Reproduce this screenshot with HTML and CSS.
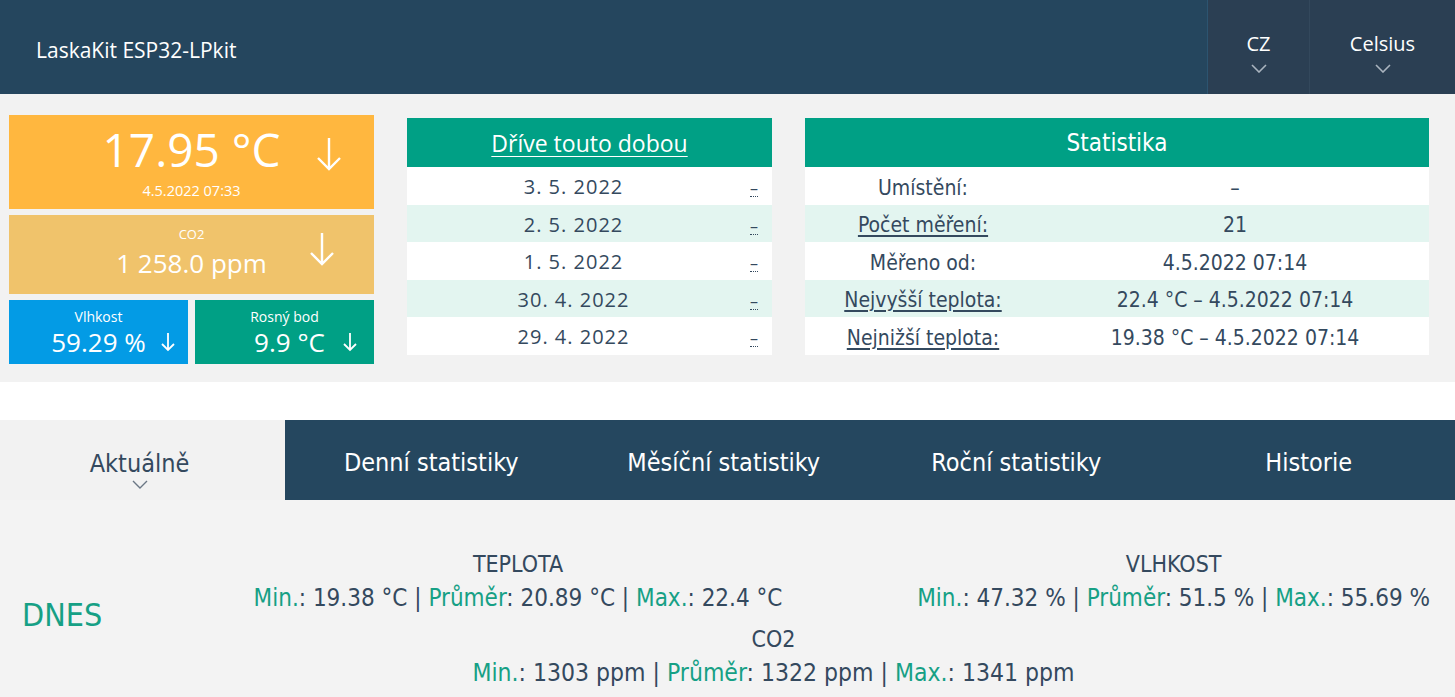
FILE: index.html
```html
<!DOCTYPE html>
<html lang="cs">
<head>
<meta charset="utf-8">
<title>LaskaKit ESP32-LPkit</title>
<link rel="stylesheet" href="styles.css">
</head>
<body>
<header class="topbar">
  <div class="brand">LaskaKit ESP32-LPkit</div>
  <div class="selectors">
    <div class="sel sel-lang">CZ<svg class="chev" viewBox="0 0 16 9" width="16" height="9"><polyline points="1,1 8,8 15,1" fill="none" stroke="#aab4bf" stroke-width="1.6"/></svg></div>
    <div class="sel sel-unit">Celsius<svg class="chev" viewBox="0 0 16 9" width="16" height="9"><polyline points="1,1 8,8 15,1" fill="none" stroke="#aab4bf" stroke-width="1.6"/></svg></div>
  </div>
</header>

<section class="overview">
  <div class="cards">
    <div class="card card-temp">
      <div class="big">17.95 °C</div>
      <div class="arrow"><svg viewBox="0 0 26 34" width="26" height="34"><path d="M13 1 V32 M2 21 L13 32 L24 21" fill="none" stroke="#fff" stroke-width="2.4"/></svg></div>
      <div class="small">4.5.2022 07:33</div>
    </div>
    <div class="card card-co2">
      <div class="small">CO2</div>
      <div class="arrow"><svg viewBox="0 0 26 34" width="26" height="34"><path d="M13 1 V32 M2 21 L13 32 L24 21" fill="none" stroke="#fff" stroke-width="2.4"/></svg></div>
      <div class="mid">1 258.0 ppm</div>
    </div>
    <div class="card-row">
      <div class="card card-hum">
        <div class="label">Vlhkost</div>
        <div class="arrow arrow-sm"><svg viewBox="0 0 16 20" width="16" height="20"><path d="M8 1 V18 M2 12 L8 18 L14 12" fill="none" stroke="#fff" stroke-width="1.8"/></svg></div>
        <div class="mid">59.29 %</div>
      </div>
      <div class="card card-dew">
        <div class="label">Rosný bod</div>
        <div class="arrow arrow-sm"><svg viewBox="0 0 16 20" width="16" height="20"><path d="M8 1 V18 M2 12 L8 18 L14 12" fill="none" stroke="#fff" stroke-width="1.8"/></svg></div>
        <div class="mid">9.9 °C</div>
      </div>
    </div>
  </div>

  <table class="tbl tbl-past">
    <thead><tr><th colspan="2"><a class="thlink" href="#">Dříve touto dobou</a></th></tr></thead>
    <tbody>
      <tr><td class="date">3. 5. 2022</td><td class="dash"><span class="dot">–</span></td></tr>
      <tr><td class="date">2. 5. 2022</td><td class="dash"><span class="dot">–</span></td></tr>
      <tr><td class="date">1. 5. 2022</td><td class="dash"><span class="dot">–</span></td></tr>
      <tr><td class="date">30. 4. 2022</td><td class="dash"><span class="dot">–</span></td></tr>
      <tr><td class="date">29. 4. 2022</td><td class="dash"><span class="dot">–</span></td></tr>
    </tbody>
  </table>

  <table class="tbl tbl-stat">
    <thead><tr><th colspan="2">Statistika</th></tr></thead>
    <tbody>
      <tr><td class="lab">Umístění:</td><td>–</td></tr>
      <tr><td class="lab"><span class="u">Počet měření:</span></td><td>21</td></tr>
      <tr><td class="lab">Měřeno od:</td><td>4.5.2022 07:14</td></tr>
      <tr><td class="lab"><span class="u">Nejvyšší teplota:</span></td><td>22.4 °C – 4.5.2022 07:14</td></tr>
      <tr><td class="lab"><span class="u">Nejnižší teplota:</span></td><td>19.38 °C – 4.5.2022 07:14</td></tr>
    </tbody>
  </table>
</section>

<div class="spacer"></div>

<nav class="tabs">
  <div class="tab active">Aktuálně<svg class="chev" viewBox="0 0 16 9" width="16" height="9"><polyline points="1,1 8,8 15,1" fill="none" stroke="#6b7785" stroke-width="1.4"/></svg></div>
  <div class="tab">Denní statistiky</div>
  <div class="tab">Měsíční statistiky</div>
  <div class="tab">Roční statistiky</div>
  <div class="tab">Historie</div>
</nav>

<section class="today">
  <div class="dnes">DNES</div>
  <div class="block b-temp">
    <div class="bt">TEPLOTA</div>
    <div class="bl"><span class="g">Min.</span>: 19.38 °C | <span class="g">Průměr</span>: 20.89 °C | <span class="g">Max.</span>: 22.4 °C</div>
  </div>
  <div class="block b-hum">
    <div class="bt">VLHKOST</div>
    <div class="bl"><span class="g">Min.</span>: 47.32 % | <span class="g">Průměr</span>: 51.5 % | <span class="g">Max.</span>: 55.69 %</div>
  </div>
  <div class="block b-co2">
    <div class="bt">CO2</div>
    <div class="bl bl-co2"><span class="g">Min.</span>: 1303 ppm | <span class="g">Průměr</span>: 1322 ppm | <span class="g">Max.</span>: 1341 ppm</div>
  </div>
</section>
</body>
</html>
```

FILE: styles.css
```css
* { box-sizing: border-box; }
html, body { margin: 0; padding: 0; }
body {
  background: #f2f2f2;
  font-family: "Open Sans", "Noto Sans", sans-serif;
  color: #34495e;
  width: 1455px;
  overflow: hidden;
}

.topbar {
  height: 94px;
  background: #25465e;
  display: flex;
  justify-content: space-between;
  align-items: stretch;
}
.brand {
  color: #fff;
  font-size: 21px;
  padding-left: 36px;
  display: flex;
  align-items: center;
  padding-top: 6px;
}
.selectors { display: flex; }
.sel {
  background: #2b3f53;
  color: #fff;
  font-size: 20px;
  display: flex;
  flex-direction: column;
  align-items: center;
  justify-content: center;
  gap: 7px;
  padding-top: 8px;
  border-left: 1px solid #33485c;
}
.sel-lang { width: 102px; border-left-color: #2c5470; }
.sel-unit { width: 146px; }
.chev { display: block; }

.overview {
  display: flex;
  align-items: flex-start;
  padding: 21px 0 18px 9px;
  height: 288px;
}
.cards { width: 365px; display: flex; flex-direction: column; gap: 6px; }
.card {
  color: #fff;
  display: grid;
  grid-template-columns: 1fr auto 1fr;
  align-items: center;
  text-align: center;
}
.card > .big, .card > .small, .card > .mid, .card > .label { grid-column: 2; }
.card > .arrow { grid-column: 3; grid-row: 1 / span 2; justify-self: center; display: flex; }
.card-temp { background: #ffb73f; height: 94px; padding-top: 10px; align-content: start; }
.card-temp .big { font-size: 46px; line-height: 48px; grid-row: 1; }
.card-temp .small { font-size: 14.5px; line-height: 18px; grid-row: 2; margin-top: 9px; }
.card-temp .arrow { padding-left: 4px; padding-bottom: 18px; }
.card-co2 { background: #f0c36b; height: 79px; align-content: start; padding-top: 10px; }
.card-co2 .small { font-size: 13px; line-height: 18px; grid-row: 1; }
.card-co2 .mid { font-size: 26px; line-height: 34px; grid-row: 2; margin-top: 3px; }
.card-co2 .arrow { padding-left: 4px; padding-bottom: 8px; }
.card-row { display: flex; gap: 7px; }
.card-hum, .card-dew { width: 179px; height: 64px; align-content: center; padding-top: 2px; }
.card-hum { background: #039be5; }
.card-dew { background: #00a085; }
.card .label { font-size: 14px; line-height: 18px; grid-row: 1; }
.card-hum .mid, .card-dew .mid { font-size: 26px; line-height: 32px; grid-row: 2; }
.card .arrow-sm { grid-row: 2; padding-left: 2px; }
.card-dew .mid { padding-left: 10px; }

.tbl {
  border-collapse: collapse;
  margin-top: 3px;
  font-size: 20px;
  color: #34495e;
}
.tbl th {
  background: #00a085;
  color: #fff;
  font-weight: normal;
  font-size: 23px;
  height: 49px;
  padding: 0;
}
.tbl td { height: 37.5px; padding: 2px 0 0; text-align: center; }
.tbl tbody tr:nth-child(odd) td { background: #fff; }
.tbl tbody tr:nth-child(even) td { background: #e3f5f0; }
.tbl-past { width: 365px; margin-left: 33px; }
.thlink { color: #fff; text-decoration: underline; text-underline-offset: 4px; text-decoration-thickness: 1px; }
.tbl-past .date { letter-spacing: 1px; padding-right: 10px; }
.tbl-past .dash { width: 22px; text-align: left; }
.dot {
  font-size: 16px;
  color: #34495e;
  border-bottom: 1px dotted #34495e;
  display: inline-block;
  line-height: 16px;
  padding-bottom: 0;
}
.tbl-stat { width: 624px; margin-left: 33px; }
.tbl-stat th { font-family: "Liberation Sans Narrow", "DejaVu Sans Condensed", sans-serif; font-size: 24px; }
.tbl-stat td { font-family: "Liberation Sans Narrow", "DejaVu Sans Condensed", sans-serif; font-size: 21px; padding-top: 4px; }
.tbl-stat .lab { width: 236px; }
.u { text-decoration: underline; text-underline-offset: 3px; }

.spacer { height: 38px; background: #fff; }

.tabs {
  display: grid;
  grid-template-columns: 285px repeat(4, 1fr);
  height: 80px;
  background: #25475f;
  font-family: "Liberation Sans Narrow", "DejaVu Sans Condensed", sans-serif;
  font-size: 25px;
}
.tab {
  color: #fff;
  display: flex;
  flex-direction: column;
  align-items: center;
  justify-content: center;
  padding-top: 5px;
}
.tab.active {
  background: #f2f2f2;
  color: #34495e;
  padding-top: 18px;
  gap: 2px;
  padding-right: 6px;
}

.today {
  background: #f3f3f3;
  height: 197px;
  display: grid;
  grid-template-columns: 215px 606px 1fr;
  grid-template-rows: auto auto;
  padding-top: 48px;
  font-family: "Liberation Sans Narrow", "DejaVu Sans Condensed", sans-serif;
  color: #34495e;
}
.dnes {
  grid-column: 1;
  grid-row: 1 / span 2;
  align-self: center;
  color: #16a085;
  font-size: 32px;
  padding-left: 22px;
  padding-bottom: 16px;
}
.block { text-align: center; }
.bt { font-size: 23px; line-height: 32px; }
.bl { font-size: 24px; line-height: 36px; }
.bl-co2 { font-size: 24.5px; }
.g { color: #16a085; }
.b-temp { grid-column: 2; grid-row: 1; }
.b-hum { grid-column: 3; grid-row: 1; justify-self: end; padding-right: 25px; }
.b-co2 { grid-column: 1 / span 3; grid-row: 2; padding-left: 92px; padding-top: 1px; }
```
